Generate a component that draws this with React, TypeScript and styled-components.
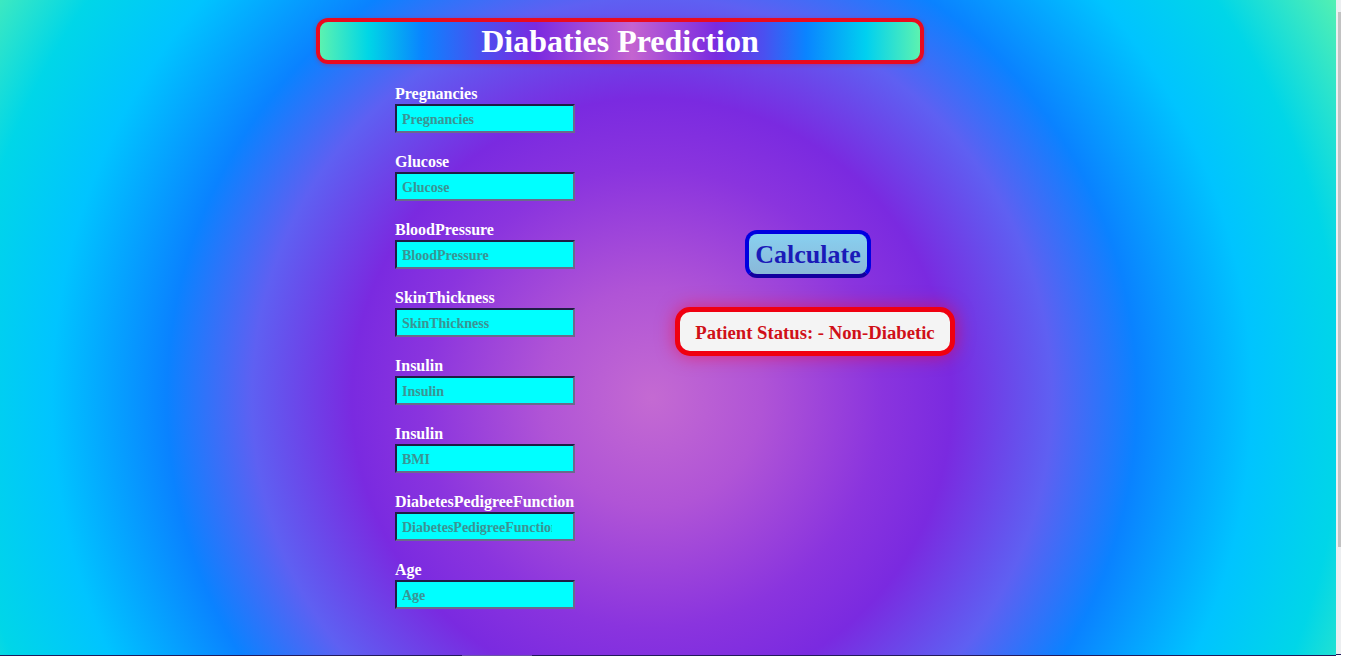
import { FC } from 'react';
import styled, { createGlobalStyle } from 'styled-components';

const GlobalStyle = createGlobalStyle`
  html, body {
    margin: 0;
    padding: 0;
    background: #ffffff;
    overflow: hidden;
  }
  body {
    font-family: 'Liberation Serif', 'Times New Roman', serif;
  }
`;

const Frame = styled.div`
  display: grid;
  grid-template-columns: 1fr 28px;
  height: 659px;
`;

const Viewport = styled.div`
  display: flex;
  flex-direction: column;
  min-width: 0;
`;

const Page = styled.div`
  height: 655px;
  overflow: hidden;
  box-sizing: border-box;
  padding: 18px 0 0 316px;
  background: radial-gradient(
    circle at 652px 398px,
    #c46ad2 0px,
    #b054d6 110px,
    #8a34de 230px,
    #7a2ae0 300px,
    #5e60f2 400px,
    #0a82ff 485px,
    #00c4ff 600px,
    #00d6e8 690px,
    #5af2ae 800px
  );
`;

/* fake horizontal scrollbar line under the page */
const HScroll = styled.div`
  height: 1px;
  background: #231a5c;
  padding-left: 462px;
`;

const HThumb = styled.div`
  width: 70px;
  height: 1px;
  background: #6a52a8;
`;

const VScroll = styled.div`
  display: flex;
  background: #ffffff;
`;

const VTrack = styled.div`
  width: 5px;
  height: 655px;
  box-sizing: border-box;
  padding: 12px 0 0 2px;
  background: #eceef0;
  border-bottom: 1px solid #231a5c;
`;

const VThumb = styled.div`
  width: 3px;
  height: 535px;
  background: #c2c2c2;
`;

const Header = styled.header`
  width: 608px;
  height: 46px;
  box-sizing: border-box;
  border: 4px solid #ea0a1e;
  border-radius: 12px;
  display: flex;
  align-items: center;
  justify-content: center;
  background: linear-gradient(
    to right,
    #5cf2b0 0%,
    #00d6e6 8%,
    #0a84ff 17%,
    #4a50f0 27%,
    #7a2ae0 36%,
    #c464d0 52%,
    #7a2ae0 66%,
    #4a50f0 74%,
    #0a84ff 81%,
    #00d0f0 91%,
    #5cf2b0 100%
  );
  box-shadow: 0 1px 4px rgba(230, 0, 30, 0.35);
`;

const Title = styled.h1`
  margin: 0;
  font-size: 32px;
  font-weight: bold;
  color: #ffffff;
  line-height: 1;
`;

const Body = styled.main`
  display: flex;
  padding: 21px 0 0 79px;
`;

const Form = styled.form`
  display: flex;
  flex-direction: column;
  width: 180px;
`;

const Field = styled.div`
  display: flex;
  flex-direction: column;
  margin-bottom: 20px;
`;

const Label = styled.label`
  font-size: 16px;
  font-weight: bold;
  line-height: 18px;
  color: #ffffff;
  white-space: nowrap;
`;

const Input = styled.input`
  width: 180px;
  height: 29px;
  box-sizing: border-box;
  margin: 1px 0 0;
  padding: 2px 21px 0 5px;
  background: #00ffff;
  border: 2px solid;
  border-color: #1e1e44 #6a6a8c #6a6a8c #1e1e44;
  font-family: 'Liberation Serif', 'Times New Roman', serif;
  font-size: 14px;
  font-weight: bold;
  color: #1a5c5c;
  outline: none;

  &::placeholder {
    color: #3a9494;
  }
`;

const Result = styled.section`
  display: flex;
  flex-direction: column;
  align-items: flex-start;
  margin-left: 100px;
  padding-top: 145px;
  width: 280px;
`;

const CalcButton = styled.button`
  margin-left: 70px;
  width: 126px;
  height: 48px;
  box-sizing: border-box;
  border: 4px solid #0000e0;
  border-bottom-color: #12009e;
  border-radius: 12px;
  background: linear-gradient(to bottom, #88d0f0, #8ab8d8);
  font-family: 'Liberation Serif', 'Times New Roman', serif;
  font-size: 26px;
  font-weight: bold;
  color: #1a1ab8;
  padding: 2px 0 0;
  cursor: pointer;
`;

const Status = styled.div`
  margin-top: 29px;
  width: 280px;
  height: 49px;
  box-sizing: border-box;
  border: 5px solid #f00010;
  border-radius: 15px;
  background: #f4f4f4;
  box-shadow: 0 0 18px rgba(255, 0, 40, 0.55);
  display: flex;
  align-items: center;
  justify-content: center;
  padding-top: 2px;
  font-size: 18.7px;
  font-weight: bold;
  color: #d01018;
  white-space: nowrap;
`;

const fields: { label: string; placeholder: string }[] = [
  { label: 'Pregnancies', placeholder: 'Pregnancies' },
  { label: 'Glucose', placeholder: 'Glucose' },
  { label: 'BloodPressure', placeholder: 'BloodPressure' },
  { label: 'SkinThickness', placeholder: 'SkinThickness' },
  { label: 'Insulin', placeholder: 'Insulin' },
  { label: 'Insulin', placeholder: 'BMI' },
  { label: 'DiabetesPedigreeFunction', placeholder: 'DiabetesPedigreeFunction' },
  { label: 'Age', placeholder: 'Age' },
];

const FormField: FC<{ label: string; placeholder: string; id: string }> = ({
  label,
  placeholder,
  id,
}) => (
  <Field>
    <Label htmlFor={id}>{label}</Label>
    <Input id={id} type="text" placeholder={placeholder} />
  </Field>
);

export default function App() {
  return (
    <Frame>
      <GlobalStyle />
      <Viewport>
        <Page>
          <Header>
            <Title>Diabaties Prediction</Title>
          </Header>
          <Body>
            <Form onSubmit={(e) => e.preventDefault()}>
              {fields.map((f, i) => (
                <FormField key={i} id={`field-${i}`} label={f.label} placeholder={f.placeholder} />
              ))}
            </Form>
            <Result>
              <CalcButton type="button">Calculate</CalcButton>
              <Status>Patient Status: - Non-Diabetic</Status>
            </Result>
          </Body>
        </Page>
        <HScroll>
          <HThumb />
        </HScroll>
      </Viewport>
      <VScroll>
        <VTrack>
          <VThumb />
        </VTrack>
      </VScroll>
    </Frame>
  );
}
